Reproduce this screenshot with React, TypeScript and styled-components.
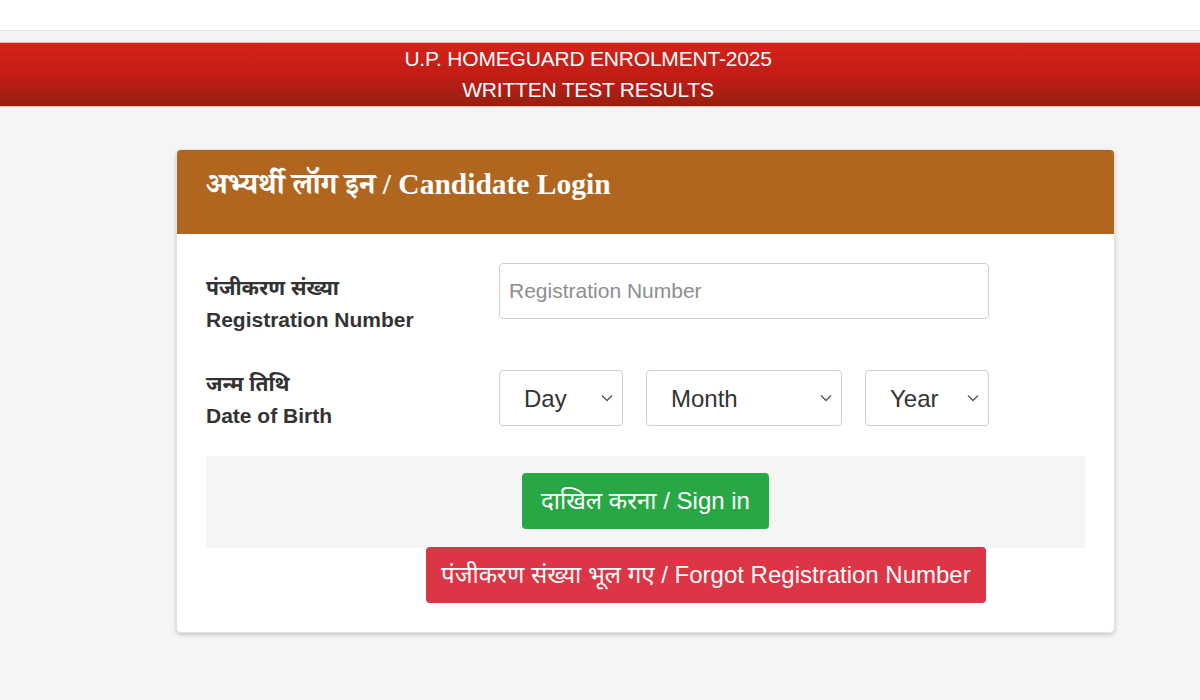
import React from "react";
import styled, { createGlobalStyle } from "styled-components";

const Global = createGlobalStyle`
  html, body { margin: 0; padding: 0; background: #f5f5f5; }
  body { font-family: "Liberation Sans", Arial, "Noto Sans Devanagari", "Lohit Devanagari", "FreeSans", sans-serif; color: #333; }
  * { box-sizing: border-box; }
`;

const Page = styled.div`
  width: 1200px;
  min-height: 700px;
  background: #f5f5f5;
`;

const TopStrip = styled.div`
  height: 31px;
  background: #fff;
  border-bottom: 1px solid #e2e2e2;
`;

const Gap = styled.div`
  height: 11px;
  background: #f3f3f3;
`;

const Banner = styled.header`
  height: 65px;
  background: linear-gradient(to bottom, #d52219 0%, #c21d16 50%, #962012 100%);
  border-top: 1px solid #e8b8a0;
  border-bottom: 1px solid #e8c0b0;
  display: flex;
  flex-direction: column;
  align-items: center;
  justify-content: center;
  gap: 7px;
  color: #fff;
  font-size: 21px;
  line-height: 24px;
  padding-right: 24px;
`;

const BannerLine = styled.div`
  letter-spacing: -0.2px;
`;

const Main = styled.main`
  padding: 42px 0 0 176px;
`;

const Card = styled.section`
  width: 939px;
  background: #fff;
  border-radius: 5px;
  border: 1px solid #e4e4e4;
  box-shadow: 0 2px 4px rgba(0, 0, 0, 0.18);
  overflow: hidden;
`;

const CardHeader = styled.div`
  height: 84px;
  background: #b1661f;
  display: flex;
  align-items: center;
  padding: 0 29px 6px;
  color: #fff;
  font-family: "Liberation Serif", "Noto Serif Devanagari", "Noto Sans Devanagari", serif;
  font-weight: bold;
  font-size: 29.5px;
`;

const CardBody = styled.div`
  padding: 29px 29px 29px;
  display: flex;
  flex-direction: column;
`;

const FormRow = styled.div<{ $mb: number }>`
  display: grid;
  grid-template-columns: 293px 490px;
  align-items: start;
  margin-bottom: ${(p) => p.$mb}px;
`;

const Label = styled.div<{ $top: number }>`
  margin-top: ${(p) => p.$top}px;
  font-weight: bold;
  font-size: 21px;
  line-height: 32px;
  color: #333;
`;

const Control = styled.div<{ $top: number }>`
  margin-top: ${(p) => p.$top}px;
`;

const TextInput = styled.input`
  display: block;
  height: 56px;
  width: 490px;
  border: 1px solid #cfcfcf;
  border-radius: 4px;
  padding: 0 9px;
  font-size: 21px;
  font-family: "Liberation Sans", Arial, sans-serif;
  color: #333;
  outline: none;
  &::placeholder { color: #8e8e8e; }
`;

const SelectGroup = styled.div`
  display: flex;
  gap: 23px;
`;

const Select = styled.select<{ $w: number }>`
  appearance: none;
  -webkit-appearance: none;
  width: ${(p) => p.$w}px;
  height: 56px;
  border: 1px solid #cfcfcf;
  border-radius: 4px;
  background: #fff url("data:image/svg+xml;utf8,<svg xmlns='http://www.w3.org/2000/svg' width='12' height='8' viewBox='0 0 12 8'><path d='M1 1.5 L6 6.5 L11 1.5' fill='none' stroke='%23555' stroke-width='1.3'/></svg>") no-repeat right 9px center;
  padding: 0 24px;
  font-size: 24px;
  font-family: "Liberation Sans", Arial, sans-serif;
  color: #333;
  outline: none;
`;

const ActionBand = styled.div`
  margin-top: 24px;
  background: #f5f5f5;
  height: 92px;
  padding-top: 17px;
  display: flex;
  justify-content: center;
  align-items: flex-start;
`;

const Button = styled.button<{ $bg: string; $px: number }>`
  height: 56px;
  border: none;
  border-radius: 4px;
  background: ${(p) => p.$bg};
  color: #fff;
  font-size: 24px;
  font-family: "Liberation Sans", Arial, "Noto Sans Devanagari", sans-serif;
  padding: 3px ${(p) => p.$px}px 0;
  cursor: pointer;
`;

const ForgotRow = styled.div`
  margin-top: -1px;
  padding-left: 220px;
  display: flex;
`;

export default function App() {
  return (
    <Page>
      <Global />
      <TopStrip />
      <Gap />
      <Banner>
        <BannerLine>U.P. HOMEGUARD ENROLMENT-2025</BannerLine>
        <BannerLine>WRITTEN TEST RESULTS</BannerLine>
      </Banner>
      <Main>
        <Card>
          <CardHeader>अभ्यर्थी लॉग इन / Candidate Login</CardHeader>
          <CardBody>
            <FormRow $mb={32}>
              <Label $top={9}>
                पंजीकरण संख्या
                <br />
                Registration Number
              </Label>
              <Control $top={0}>
                <TextInput placeholder="Registration Number" />
              </Control>
            </FormRow>
            <FormRow $mb={0}>
              <Label $top={0}>
                जन्म तिथि
                <br />
                Date of Birth
              </Label>
              <Control $top={2}>
                <SelectGroup>
                  <Select $w={124} defaultValue="">
                    <option value="">Day</option>
                  </Select>
                  <Select $w={196} defaultValue="">
                    <option value="">Month</option>
                  </Select>
                  <Select $w={124} defaultValue="">
                    <option value="">Year</option>
                  </Select>
                </SelectGroup>
              </Control>
            </FormRow>
            <ActionBand>
              <Button $bg="#28a745" $px={19}>दाखिल करना / Sign in</Button>
            </ActionBand>
            <ForgotRow>
              <Button $bg="#dc3545" $px={15}>पंजीकरण संख्या भूल गए / Forgot Registration Number</Button>
            </ForgotRow>
          </CardBody>
        </Card>
      </Main>
    </Page>
  );
}
